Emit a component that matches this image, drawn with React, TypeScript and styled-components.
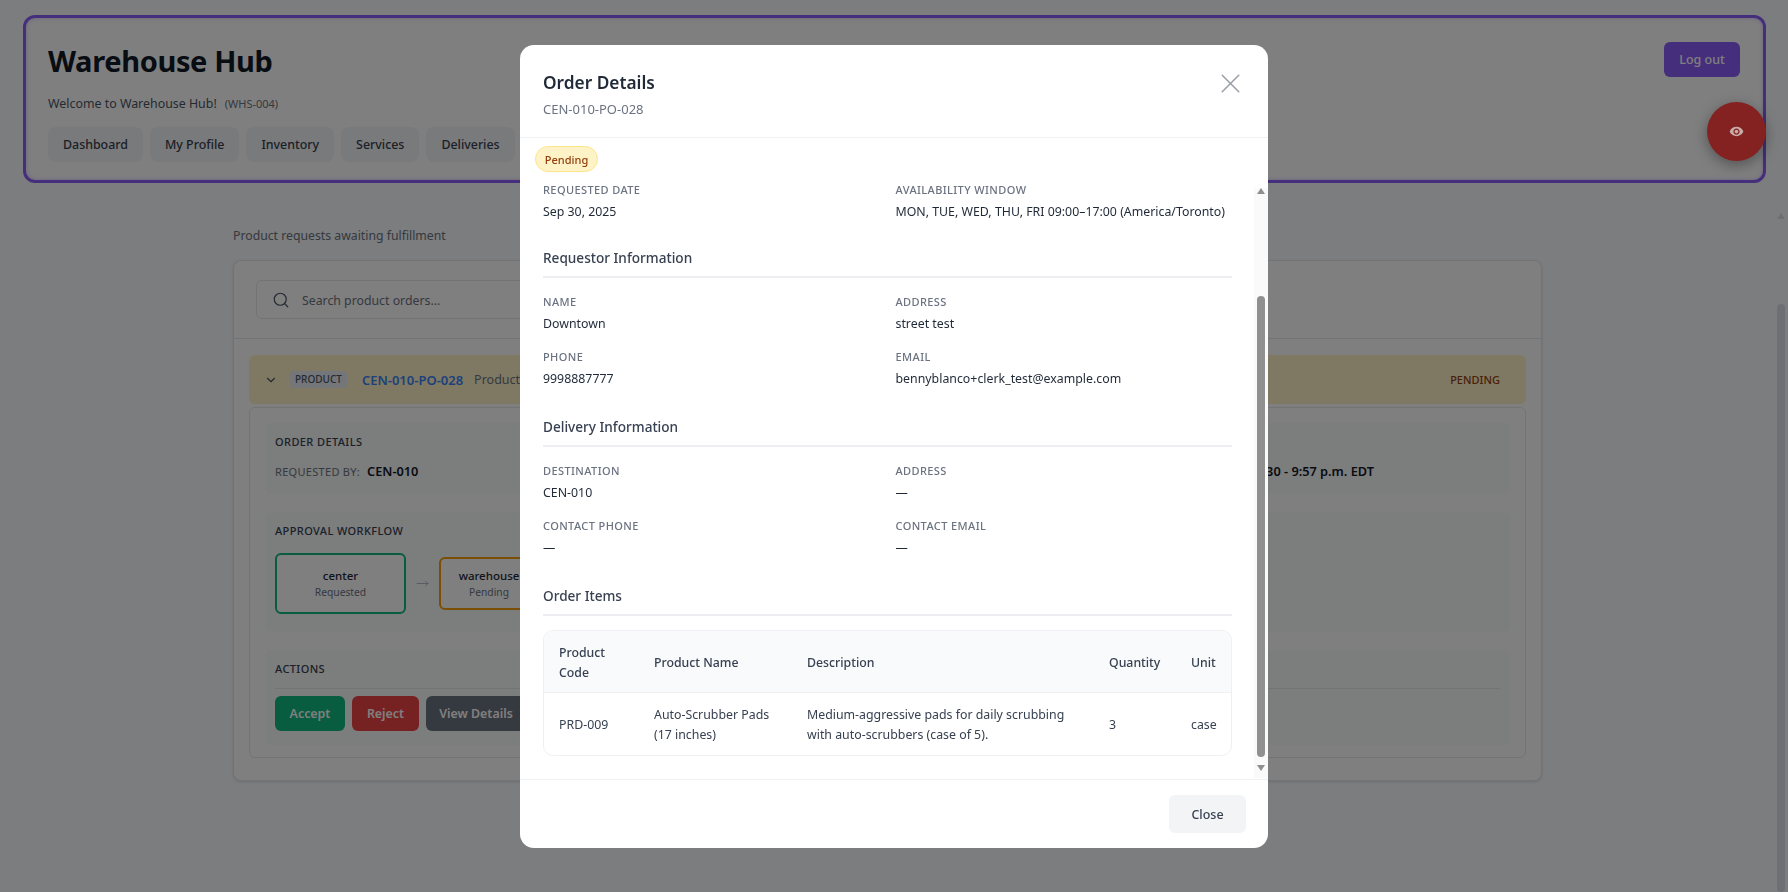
import React from 'react';
import styled, { createGlobalStyle } from 'styled-components';
import { Search, X, ChevronDown, MoveRight } from 'lucide-react';
import { MdVisibility } from 'react-icons/md';

const FONT = `"Noto Sans", "Open Sans", sans-serif`;

const GlobalStyle = createGlobalStyle`
    html,body{
        margin:0;
        height:100%;
        overflow:hidden;
        background:#f8fafc;
        font-family:${FONT};
        color:#111827;
    }
    *{box-sizing:border-box;}
`;

const navItems = ['Dashboard', 'My Profile', 'Inventory', 'Services', 'Deliveries'];

export default function App() {
    return (
        <Shell>
            <GlobalStyle />
            <Header>
                <HeaderLeft>
                    <Title>Warehouse Hub</Title>
                    <Welcome>
                        Welcome to Warehouse Hub!<Code>(WHS-004)</Code>
                    </Welcome>
                    <Nav>
                        {navItems.map((n) => (
                            <NavButton key={n}>{n}</NavButton>
                        ))}
                    </Nav>
                </HeaderLeft>
                <LogOut>Log out</LogOut>
            </Header>
            <ContentRow>
                <Main>
                    <Lead>Product requests awaiting fulfillment</Lead>
                    <Card>
                        <SearchBar>
                            <SearchBox>
                                <Search size={18} color="#4b5563" strokeWidth={1.6} />
                                <SearchText>Search product orders...</SearchText>
                            </SearchBox>
                        </SearchBar>
                        <List>
                            <OrderRow>
                                <ChevronDown size={14} color="#4b5563" />
                                <TypeTag>PRODUCT</TypeTag>
                                <OrderLink>CEN-010-PO-028</OrderLink>
                                <OrderDesc>Product</OrderDesc>
                                <RowStatus>PENDING</RowStatus>
                            </OrderRow>
                            <Panel>
                                <PanelSection>
                                    <PanelTitle>ORDER DETAILS</PanelTitle>
                                    <MetaRow>
                                        <Meta>
                                            <MetaLabel>REQUESTED BY:</MetaLabel>
                                            <MetaValue>CEN-010</MetaValue>
                                        </Meta>
                                        <Meta>
                                            <MetaLabel>CREATED:</MetaLabel>
                                            <MetaValue>2025-09-30 - 9:57 p.m. EDT</MetaValue>
                                        </Meta>
                                    </MetaRow>
                                </PanelSection>
                                <PanelSection>
                                    <PanelTitle>APPROVAL WORKFLOW</PanelTitle>
                                    <Workflow>
                                        <Step $state="done">
                                            <StepName>center</StepName>
                                            <StepState>Requested</StepState>
                                        </Step>
                                        <MoveRight size={13} color="#9ca3af" strokeWidth={1.4} />
                                        <Step $state="pending">
                                            <StepName>warehouse</StepName>
                                            <StepState>Pending</StepState>
                                        </Step>
                                    </Workflow>
                                </PanelSection>
                                <PanelSection>
                                    <ActionsTitle>ACTIONS</ActionsTitle>
                                    <Actions>
                                        <ActionButton $bg="#10b981" $w={70}>Accept</ActionButton>
                                        <ActionButton $bg="#ef4444" $w={67}>Reject</ActionButton>
                                        <ActionButton $bg="#6b7280" $w={100}>View Details</ActionButton>
                                    </Actions>
                                </PanelSection>
                            </Panel>
                        </List>
                    </Card>
                </Main>
                <PageTrack>
                    <Arrow $dir="up" $color="#d9dfe9" />
                    <PageThumb />
                </PageTrack>
            </ContentRow>

            <Overlay>
                <Modal>
                    <ModalHeader>
                        <div>
                            <ModalTitle>Order Details</ModalTitle>
                            <ModalSub>CEN-010-PO-028</ModalSub>
                        </div>
                        <CloseIcon>
                            <X size={33} strokeWidth={1.1} />
                        </CloseIcon>
                    </ModalHeader>
                    <ModalBody>
                        <BodyContent>
                            <Badge>Pending</Badge>
                            <Fields $tail={25.5}>
                                <Field label="Requested Date" value="Sep 30, 2025" />
                                <Field label="Availability Window" value="MON, TUE, WED, THU, FRI 09:00–17:00 (America/Toronto)" />
                            </Fields>
                            <InfoTitle>Requestor Information</InfoTitle>
                            <Fields $tail={28}>
                                <Field label="Name" value="Downtown" />
                                <Field label="Address" value="street test" />
                                <Field label="Phone" value="9998887777" />
                                <Field label="Email" value="bennyblanco+clerk_test@example.com" />
                            </Fields>
                            <InfoTitle>Delivery Information</InfoTitle>
                            <Fields $tail={28}>
                                <Field label="Destination" value="CEN-010" />
                                <Field label="Address" value="—" />
                                <Field label="Contact Phone" value="—" />
                                <Field label="Contact Email" value="—" />
                            </Fields>
                            <InfoTitle>Order Items</InfoTitle>
                            <TableWrap>
                                <ItemsTable>
                                    <thead>
                                        <tr>
                                            <Th $w={95}>Product Code</Th>
                                            <Th $w={153}>Product Name</Th>
                                            <Th $w={302}>Description</Th>
                                            <Th $w={82}>Quantity</Th>
                                            <Th $w={57}>Unit</Th>
                                        </tr>
                                    </thead>
                                    <tbody>
                                        <tr>
                                            <Td>PRD-009</Td>
                                            <Td>Auto-Scrubber Pads (17 inches)</Td>
                                            <Td>Medium-aggressive pads for daily scrubbing with auto-scrubbers (case of 5).</Td>
                                            <Td>3</Td>
                                            <Td>case</Td>
                                        </tr>
                                    </tbody>
                                </ItemsTable>
                            </TableWrap>
                        </BodyContent>
                        <ModalTrack>
                            <Arrow $dir="up" $color="#8f8f8f" />
                            <ModalThumb />
                            <Arrow $dir="down" $color="#8f8f8f" />
                        </ModalTrack>
                    </ModalBody>
                    <ModalFooter>
                        <CloseButton>Close</CloseButton>
                    </ModalFooter>
                </Modal>
            </Overlay>
            <Fab>
                <MdVisibility size={15} />
            </Fab>
        </Shell>
    );
}

function Field({ label, value }: { label: string; value: string }) {
    return (
        <div>
            <FieldLabel>{label}</FieldLabel>
            <FieldValue>{value}</FieldValue>
        </div>
    );
}

const Shell = styled.div`
    position:relative;
    height:892px;
    overflow:hidden;
`;
const Header = styled.header`
    height:168px;
    margin:15px 22px 0 23px;
    padding:24px 23px 18px 22px;
    border:3px solid #8b5cf6;
    border-radius:12px;
    background:#fff;
    box-shadow:inset 0 0 5px rgba(139,92,246,.35);
    display:flex;
    justify-content:space-between;
    align-items:flex-start;
`;
const HeaderLeft = styled.div`
    display:flex;
    flex-direction:column;
`;
const Title = styled.h1`
    margin:0;
    font-size:29px;
    line-height:38px;
    letter-spacing:-.35px;
    font-weight:700;
    color:#111827;
`;
const Welcome = styled.p`
    margin:14px 0 0;
    font-size:12.4px;
    line-height:20px;
    color:#4b5563;
`;
const Code = styled.span`
    margin-left:8px;
    font-size:11px;
    color:#6b7280;
`;
const Nav = styled.nav`
    display:flex;
    gap:7px;
    margin-top:13px;
`;
const NavButton = styled.div`
    height:35px;
    padding:0 15px;
    display:flex;
    align-items:center;
    background:#f3f4f6;
    border-radius:8px;
    font-size:12.4px;
    font-weight:500;
    color:#374151;
`;
const LogOut = styled.button`
    width:76px;
    height:35px;
    border:0;
    border-radius:6px;
    background:#8b5cf6;
    color:#fff;
    font:500 12.5px ${FONT};
`;
const Fab = styled.div`
    position:absolute;
    left:1707px;
    top:102px;
    width:59px;
    height:59px;
    border-radius:50%;
    background:#842121;
    color:#c8aca8;
    display:flex;
    align-items:center;
    justify-content:center;
    box-shadow:0 4px 14px rgba(0,0,0,.35);
`;
const ContentRow = styled.div`
    display:flex;
    height:709px;
`;
const Main = styled.main`
    flex:1;
    padding:44px 231px 0 233px;
    min-width:0;
`;
const Lead = styled.p`
    margin:0 0 15px;
    font-size:12.25px;
    line-height:18px;
    color:#6b7280;
`;
const Card = styled.section`
    background:#fff;
    border:1px solid #e5e7eb;
    border-radius:8px;
    box-shadow:0 1px 3px rgba(0,0,0,.12);
`;
const SearchBar = styled.div`
    padding:19px 22px 19px;
    border-bottom:1px solid #e5e7eb;
`;
const SearchBox = styled.div`
    width:420px;
    height:39px;
    padding:0 15px;
    display:flex;
    align-items:center;
    gap:12px;
    border:1px solid #e5e7eb;
    border-radius:6px;
    font-size:12.3px;
    color:#6b7280;
`;
const SearchText = styled.span`
    padding-top:2px;
`;
const List = styled.div`
    padding:16px 15px 22px;
`;
const OrderRow = styled.div`
    height:49px;
    padding:0 26px 0 15px;
    display:flex;
    align-items:center;
    background:#fef3c7;
    border-radius:6px;
    font-size:12.5px;
`;
const TypeTag = styled.span`
    margin-left:12px;
    padding:0 5px;
    height:17px;
    line-height:17px;
    background:#e8ecf5;
    border-radius:4px;
    font-size:10px;
    font-weight:500;
    color:#4b5563;
`;
const OrderLink = styled.span`
    margin-left:15px;
    font-size:13px;
    font-weight:600;
    color:#3b82f6;
`;
const OrderDesc = styled.span`
    margin-left:11px;
    color:#6b7280;
`;
const RowStatus = styled.span`
    margin-left:auto;
    font-size:11px;
    font-weight:500;
    color:#92400e;
`;
const Panel = styled.div`
    margin-top:3px;
    padding:15px 15px 12px;
    border:1px solid #e5e7eb;
    border-radius:6px;
    display:flex;
    flex-direction:column;
    gap:18px;
`;
const PanelSection = styled.div`
    padding:11px 10px 14px;
    background:#f9fafb;
    border-radius:6px;
`;
const PanelTitle = styled.h4`
    margin:0 0 12px;
    font-size:11px;
    line-height:16px;
    font-weight:500;
    letter-spacing:.4px;
    color:#374151;
`;
const ActionsTitle = styled(PanelTitle)`
    padding-bottom:11px;
    margin-bottom:7px;
    border-bottom:1px solid #e5e7eb;
`;
const MetaRow = styled.div`
    display:flex;
    justify-content:space-between;
    padding-right:126px;
`;
const Meta = styled.div`
    display:flex;
    align-items:center;
    gap:7px;
`;
const MetaLabel = styled.span`
    font-size:11px;
    letter-spacing:.3px;
    color:#6b7280;
`;
const MetaValue = styled.span`
    font-size:12.75px;
    font-weight:600;
    color:#111827;
`;
const Workflow = styled.div`
    display:flex;
    align-items:center;
    gap:10px;
    margin:14px 0 4px;
`;
const Step = styled.div<{ $state: 'done' | 'pending' }>`
    width:${(p) => (p.$state === 'done' ? 131 : 100)}px;
    height:${(p) => (p.$state === 'done' ? 61 : 53)}px;
    display:flex;
    flex-direction:column;
    align-items:center;
    justify-content:center;
    border:2px solid ${(p) => (p.$state === 'done' ? '#10b981' : '#f59e0b')};
    border-radius:6px;
    background:#fff;
`;
const StepName = styled.div`
    font-size:11.5px;
    line-height:17px;
    font-weight:500;
    color:#1f2937;
`;
const StepState = styled.div`
    font-size:10.25px;
    line-height:16px;
    color:#6b7280;
`;
const Actions = styled.div`
    display:flex;
    gap:7px;
`;
const ActionButton = styled.button<{ $bg: string; $w: number }>`
    width:${(p) => p.$w}px;
    height:35px;
    border:0;
    border-radius:6px;
    background:${(p) => p.$bg};
    color:#fff;
    font:600 12.4px ${FONT};
`;
const PageTrack = styled.div`
    width:15px;
    margin-top:30px;
    padding-left:1px;
    display:flex;
    flex-direction:column;
    align-items:center;
`;
const PageThumb = styled.div`
    width:8px;
    margin-top:85px;
    flex:1;
    background:#d9dfe9;
    border-radius:4px;
`;
const Arrow = styled.div<{ $dir: 'up' | 'down'; $color: string }>`
    flex:none;
    width:0;
    height:0;
    border-left:4.5px solid transparent;
    border-right:4.5px solid transparent;
    ${(p) => (p.$dir === 'up' ? 'border-bottom' : 'border-top')}:6px solid ${(p) => p.$color};
`;
const Overlay = styled.div`
    position:absolute;
    inset:0;
    padding-top:1px;
    background:rgba(0,0,0,.5);
    backdrop-filter:blur(.5px);
    display:flex;
    align-items:center;
    justify-content:center;
`;
const Modal = styled.div`
    width:748px;
    height:803px;
    background:#fff;
    border-radius:14px;
    display:flex;
    flex-direction:column;
    overflow:hidden;
`;
const ModalHeader = styled.div`
    height:93px;
    flex:none;
    padding:24px 21px 0 23px;
    border-bottom:1px solid #f0f1f3;
    display:flex;
    justify-content:space-between;
`;
const ModalTitle = styled.h2`
    margin:0;
    font-size:17.3px;
    line-height:28px;
    font-weight:600;
    color:#1f2937;
`;
const ModalSub = styled.div`
    margin-top:3px;
    font-size:13px;
    line-height:18px;
    color:#6b7280;
`;
const CloseIcon = styled.div`
    margin-top:-2px;
    color:#9a9ea6;
`;
const ModalBody = styled.div`
    flex:1;
    min-height:0;
    display:flex;
`;
const BodyContent = styled.div`
    width:734px;
    padding:8px 22px 0 23px;
`;
const Badge = styled.div`
    width:63px;
    height:26px;
    margin:0 0 10px -8px;
    display:flex;
    align-items:center;
    justify-content:center;
    background:#fef3c7;
    border:1px solid #fde68a;
    border-radius:13px;
    font-size:11px;
    font-weight:500;
    color:#92400e;
`;
const Fields = styled.div<{ $tail: number }>`
    display:grid;
    grid-template-columns:1fr 1fr;
    gap:15px 16px;
    margin-bottom:${(p) => p.$tail}px;
`;
const FieldLabel = styled.div`
    font-size:11px;
    line-height:16px;
    font-weight:500;
    letter-spacing:.4px;
    text-transform:uppercase;
    color:#6b7280;
`;
const FieldValue = styled.div`
    margin-top:4px;
    font-size:12.35px;
    line-height:20px;
    color:#1f2937;
`;
const InfoTitle = styled.h3`
    margin:0 0 16px;
    padding-bottom:8px;
    border-bottom:2px solid #eceef1;
    font-size:13.6px;
    line-height:20px;
    font-weight:500;
    color:#374151;
`;
const TableWrap = styled.div`
    margin-top:-2px;
    border:1px solid #eef0f3;
    border-radius:10px;
    overflow:hidden;
`;
const ItemsTable = styled.table`
    width:100%;
    table-layout:fixed;
    border-collapse:collapse;
`;
const Th = styled.th<{ $w: number }>`
    width:${(p) => p.$w}px;
    height:62px;
    padding:3px 15px 0;
    background:#f9fafb;
    border-bottom:1px solid #eef0f3;
    text-align:left;
    font-size:12.3px;
    line-height:20px;
    font-weight:500;
    color:#374151;
`;
const Td = styled.td`
    height:62px;
    padding:3px 15px 0;
    font-size:12.35px;
    line-height:20px;
    color:#374151;
`;
const ModalTrack = styled.div`
    width:14px;
    margin-top:50px;
    height:590px;
    background:#fafafa;
    display:flex;
    flex-direction:column;
    align-items:center;
`;
const ModalThumb = styled.div`
    flex:none;
    width:8px;
    height:461px;
    margin:102px 0 8px;
    border-radius:4px;
    background:#909090;
`;
const ModalFooter = styled.div`
    height:69px;
    flex:none;
    padding:15px 22px 0 0;
    border-top:1px solid #f0f1f3;
    display:flex;
    justify-content:flex-end;
`;
const CloseButton = styled.button`
    width:77px;
    height:38px;
    border:0;
    border-radius:6px;
    background:#f3f4f6;
    color:#374151;
    font:500 12.5px ${FONT};
`;
